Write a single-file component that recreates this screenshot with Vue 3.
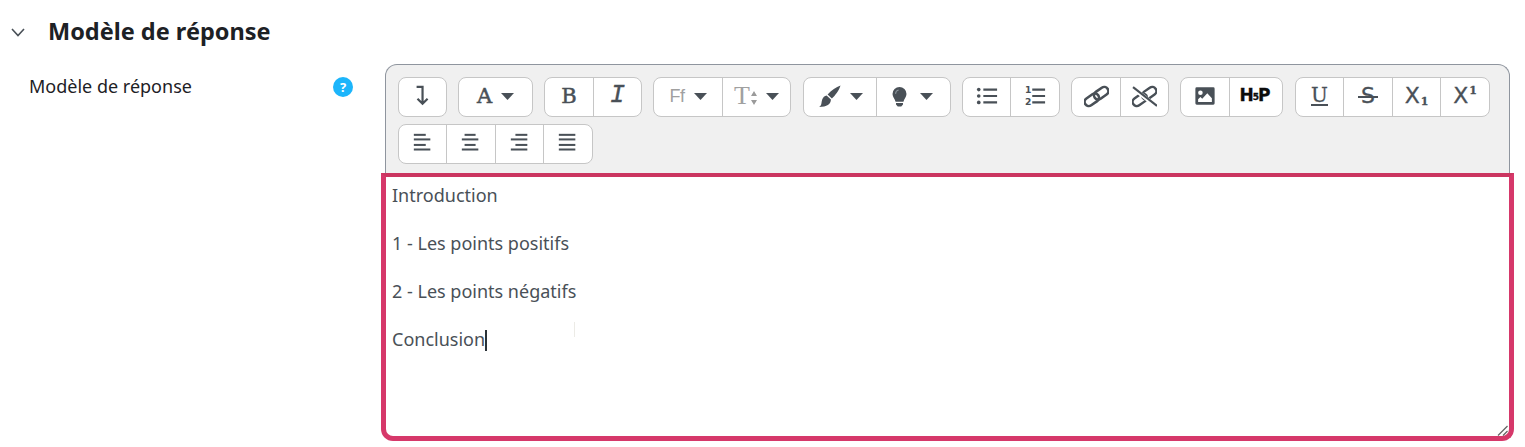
<script setup>
const toolbar = [
  [{ w: 47, k: 'wrap' }],
  [{ w: 73, k: 'font', caret: true }],
  [{ w: 48, k: 'bold' }, { w: 48, k: 'italic' }],
  [{ w: 68, k: 'ff', caret: true }, { w: 68, k: 'size', caret: true }],
  [{ w: 72, k: 'brush', caret: true }, { w: 74, k: 'bulb', caret: true }],
  [{ w: 47, k: 'ul' }, { w: 49, k: 'ol' }],
  [{ w: 48, k: 'link' }, { w: 48, k: 'unlink' }],
  [{ w: 48, k: 'image' }, { w: 53, k: 'h5p' }],
  [{ w: 47, k: 'underline' }, { w: 49, k: 'strike' }, { w: 48, k: 'sub' }, { w: 49, k: 'sup' }],
  [{ w: 47, k: 'left' }, { w: 49, k: 'center' }, { w: 48, k: 'right' }, { w: 49, k: 'justify' }]
]
const aligns = {
  left: [[2, 13], [2, 18], [2, 13], [2, 18]],
  center: [[5, 12], [2, 18], [5, 12], [2, 18]],
  right: [[7, 13], [2, 18], [7, 13], [2, 18]],
  justify: [[2, 18], [2, 18], [2, 18], [2, 18]]
}
const lineY = [2, 7, 13, 18]
const paragraphs = ['Introduction', '1 - Les points positifs', '2 - Les points négatifs']
</script>

<template>
  <main class="page">
    <h2 class="heading">
      <svg class="chevron" width="14" height="9" viewBox="0 0 14 9" aria-hidden="true">
        <path d="M1 1l6 6.500L13 1" fill="none" stroke="#495057" stroke-width="1.600" />
      </svg>
      <span>Modèle de réponse</span>
    </h2>
    <section class="field">
      <div class="label-col">
        <label>Modèle de réponse</label>
        <span class="help">?</span>
      </div>
      <div class="editor">
        <div class="toolbar">
          <div v-for="(group, g) in toolbar" :key="g" class="group" :class="{ nudge: g === 4 || g === 8 }">
            <button v-for="b in group" :key="b.k" type="button" class="btn" :style="{ width: b.w + 'px' }">
              <svg v-if="b.k === 'wrap'" class="ico" viewBox="0 0 24 24">
                <path d="M5 2h6.500v18M6 15l5.500 5.500L17 15" fill="none" stroke="#495057" stroke-width="2.400" />
              </svg>
              <span v-else-if="b.k === 'font'" class="serif letter a">A</span>
              <span v-else-if="b.k === 'bold'" class="serif letter b">B</span>
              <span v-else-if="b.k === 'italic'" class="mono">I</span>
              <span v-else-if="b.k === 'ff'" class="ff">Ff</span>
              <span v-else-if="b.k === 'size'" class="size">T<svg class="updown" width="6" height="14" viewBox="0 0 6 14"><path d="M3 0l3 5H0zM3 14l3-5H0z" fill="#9b9b9b" /></svg></span>
              <svg v-else-if="b.k === 'brush'" class="ico brush" viewBox="0 0 24 24">
                <path d="M23.500 .5c-1.500 5-5.500 10.500-9 13.500L10 9.800C14 5.500 19 2 23.500 .5zM9 11l4.500 4.200c-.3 5-4 7.800-12.500 7.800 3-1.300 2.300-4 3.300-7.500C5 13 7 11.300 9 11z" fill="#495057" />
              </svg>
              <svg v-else-if="b.k === 'bulb'" class="ico bulb" viewBox="0 0 24 24">
                <path d="M12 1a8 8 0 0 1 8 8c0 3.500-2.800 5.500-3.500 9h-9C6.800 14.500 4 12.500 4 9a8 8 0 0 1 8-8zM8 19.500h8V21l-2 2.500h-4L8 21z" fill="#495057" />
                <path d="M7.500 9a4.500 4.500 0 0 1 3.500-4.300" fill="none" stroke="#8b949c" stroke-width="1.200" />
              </svg>
              <svg v-else-if="b.k === 'ul'" class="ico" viewBox="0 0 24 24">
                <circle cx="3" cy="5" r="2" fill="#495057" /><circle cx="3" cy="12" r="2" fill="#495057" /><circle cx="3" cy="19" r="2" fill="#495057" />
                <path d="M8 5h15M8 12h15M8 19h15" stroke="#495057" stroke-width="2.400" />
              </svg>
              <svg v-else-if="b.k === 'ol'" class="ico" viewBox="0 0 24 24">
                <text x="1" y="9" class="ol-num">1</text><text x="1" y="22" class="ol-num">2</text>
                <path d="M9 5h14M9 12h14M9 19h14" stroke="#495057" stroke-width="2.400" />
              </svg>
              <svg v-else-if="b.k === 'link'" class="ico wide" viewBox="0 0 24 24">
                <g fill="none" stroke="#495057" stroke-width="2.500" transform="rotate(-35 12 12)">
                  <rect x="-1" y="8" width="15" height="8" rx="4" />
                  <rect x="10" y="8" width="15" height="8" rx="4" />
                </g>
              </svg>
              <svg v-else-if="b.k === 'unlink'" class="ico wide" viewBox="0 0 24 24">
                <g fill="none" stroke="#495057" stroke-width="2.300" transform="rotate(-35 12 12)">
                  <rect x="-1" y="8" width="15" height="8" rx="4" />
                  <rect x="10" y="8" width="15" height="8" rx="4" />
                </g>
                <path d="M1 4l23 18" stroke="#fff" stroke-width="4" /><path d="M1 3l23 18" stroke="#495057" stroke-width="2" />
              </svg>
              <svg v-else-if="b.k === 'image'" class="ico" viewBox="0 0 24 24">
                <path fill-rule="evenodd" d="M3 2.500h18a1.500 1.500 0 0 1 1.500 1.500v16a1.500 1.500 0 0 1-1.500 1.500H3A1.500 1.500 0 0 1 1.500 20V4A1.500 1.500 0 0 1 3 2.500zM7 6a2.500 2.500 0 1 0 0 5 2.500 2.500 0 0 0 0-5zM4.500 18.500h15v-4L14.500 9 9 15l-2-2-2.500 2.500z" fill="#495057" />
              </svg>
              <span v-else-if="b.k === 'h5p'" class="h5p">H<small>5</small>P</span>
              <span v-else-if="b.k === 'underline'" class="under">U</span>
              <span v-else-if="b.k === 'strike'" class="strike">S</span>
              <span v-else-if="b.k === 'sub'" class="script">X<sub>1</sub></span>
              <span v-else-if="b.k === 'sup'" class="script">X<sup>1</sup></span>
              <svg v-else class="ico" viewBox="0 0 24 24">
                <rect v-for="(a, i) in aligns[b.k]" :key="i" :x="a[0]" :y="lineY[i]" :width="a[1]" height="2.200" fill="#495057" />
              </svg>
              <svg v-if="b.caret" class="caret" width="13" height="7" viewBox="0 0 13 7">
                <path d="M0 0h13L6.500 7z" fill="#495057" />
              </svg>
            </button>
          </div>
        </div>
        <div class="content">
          <p v-for="p in paragraphs" :key="p">{{ p }}</p>
          <p class="last">Conclusion<span class="cursor"></span></p>
          <span class="ibeam"></span>
          <svg class="grip" width="12" height="11" viewBox="0 0 12 11">
            <path d="M1 10.500L10.500 1M6 10.500l4.500-4.500" stroke="#666" stroke-width="1.300" />
          </svg>
        </div>
      </div>
    </section>
  </main>
</template>

<style>
html, body { background: #fff; overflow: hidden; }
</style>

<style scoped>
.page {
  width: 1525px;
  height: 447px;
  font-family: "Noto Sans", "Open Sans", sans-serif;
  color: #1d2125;
  box-sizing: border-box;
  overflow: hidden;
}
.heading {
  display: flex;
  align-items: center;
  height: 64px;
  margin: 0;
  font-size: 23.500px;
  font-weight: 700;
  line-height: 1;
  padding: 0 0 0 11px;
  box-sizing: border-box;
}
.chevron { margin-right: 23px; }
.field { display: grid; grid-template-columns: 385px 1125px; }
.label-col {
  display: flex;
  justify-content: space-between;
  align-items: flex-start;
  padding: 10px 32px 0 29px;
  font-size: 18px;
  line-height: 24px;
}
.help {
  width: 20px;
  height: 20px;
  margin-top: 3px;
  border-radius: 50%;
  background: #1cb5fb;
  color: #fff;
  font: 700 13px/20px "Noto Sans", sans-serif;
  text-align: center;
}
.editor { display: flex; flex-direction: column; }
.toolbar {
  display: flex;
  flex-wrap: wrap;
  gap: 7px 11px;
  align-content: flex-start;
  height: 109px;
  padding: 12px 12px 0;
  box-sizing: border-box;
  background: #f0f0f0;
  border: 1px solid #8f959e;
  border-bottom: 0;
  border-radius: 12px 12px 0 0;
}
.group {
  display: flex;
  height: 40px;
  box-sizing: border-box;
  background: #fff;
  border: 1px solid #c6c6c6;
  border-radius: 8px;
  overflow: hidden;
}
.nudge { margin-left: 1px; }
.btn {
  display: flex;
  align-items: center;
  justify-content: center;
  gap: 9px;
  height: 38px;
  padding: 0 0 2px;
  box-sizing: border-box;
  border: 0;
  border-left: 1px solid #c6c6c6;
  background: transparent;
  color: #495057;
}
.btn:first-child { border-left: 0; }
.ico { width: 22px; height: 22px; flex: none; }
.ico.wide { width: 25px; height: 25px; }
.ico.brush { width: 23px; height: 23px; margin-right: 0; }
.ico.bulb { width: 21px; height: 21px; margin: 0 1px 0 -5px; }
.caret { flex: none; }
.serif { font-family: "DejaVu Serif", serif; }
.letter { font-size: 21px; line-height: 22px; -webkit-text-stroke: .5px #495057; }
.mono { font: italic 400 25px/22px "Liberation Mono", monospace; -webkit-text-stroke: .4px #495057; }
.ff { font: 400 18px/22px "Liberation Sans", sans-serif; color: #a0a0a0; letter-spacing: -.5px; }
.size {
  display: flex;
  align-items: center;
  gap: 1px;
  font: 400 26px/24px "Liberation Serif", serif;
  color: #a0a0a0;
}
.updown { margin-top: 3px; }
.ol-num { font: 700 10px "DejaVu Sans", sans-serif; fill: #495057; }
.h5p {
  font: 700 17px/20px "DejaVu Sans", sans-serif;
  color: #0c0c0c;
  letter-spacing: -1px;
  -webkit-text-stroke: .3px #0c0c0c;
  margin-left: -3px;
}
.h5p small { font-size: 9px; vertical-align: 1px; }
.under {
  font: 400 20px/18px "DejaVu Serif", serif;
  border-bottom: 2px solid #495057;
  padding: 0;
  -webkit-text-stroke: .3px #495057;
}
.strike {
  position: relative;
  font: 400 22px/20px "DejaVu Sans", sans-serif;
  padding: 0 3px;
  -webkit-text-stroke: .3px #495057;
}
.strike::after {
  content: "";
  position: absolute;
  left: 0;
  right: 0;
  top: 10px;
  height: 2px;
  background: #495057;
}
.script { font: 400 22px/22px "DejaVu Sans", sans-serif; -webkit-text-stroke: .3px #495057; }
.script sub, .script sup { font: 700 11px/0 "DejaVu Serif", serif; margin-left: 1px; }
.script sub { vertical-align: -2px; }
.script sup { vertical-align: 9px; }
.content {
  position: relative;
  height: 268px;
  margin: 0 -4px;
  padding: 6px 6px;
  box-sizing: border-box;
  background: #fff;
  border: 5px solid #d6386a;
  border-top: 4px solid #cb3560;
  border-radius: 0 0 12px 12px;
  color: #495057;
  font-size: 18px;
  line-height: 24px;
}
.content p { margin: 0 0 24px; }
.cursor {
  display: inline-block;
  width: 1.500px;
  height: 21px;
  background: #2b3238;
  vertical-align: -5px;
}
.ibeam {
  position: absolute;
  left: 188px;
  top: 145px;
  width: 1px;
  height: 15px;
  background: #ecebe6;
}
.grip { position: absolute; right: 0; bottom: 0; }
</style>
